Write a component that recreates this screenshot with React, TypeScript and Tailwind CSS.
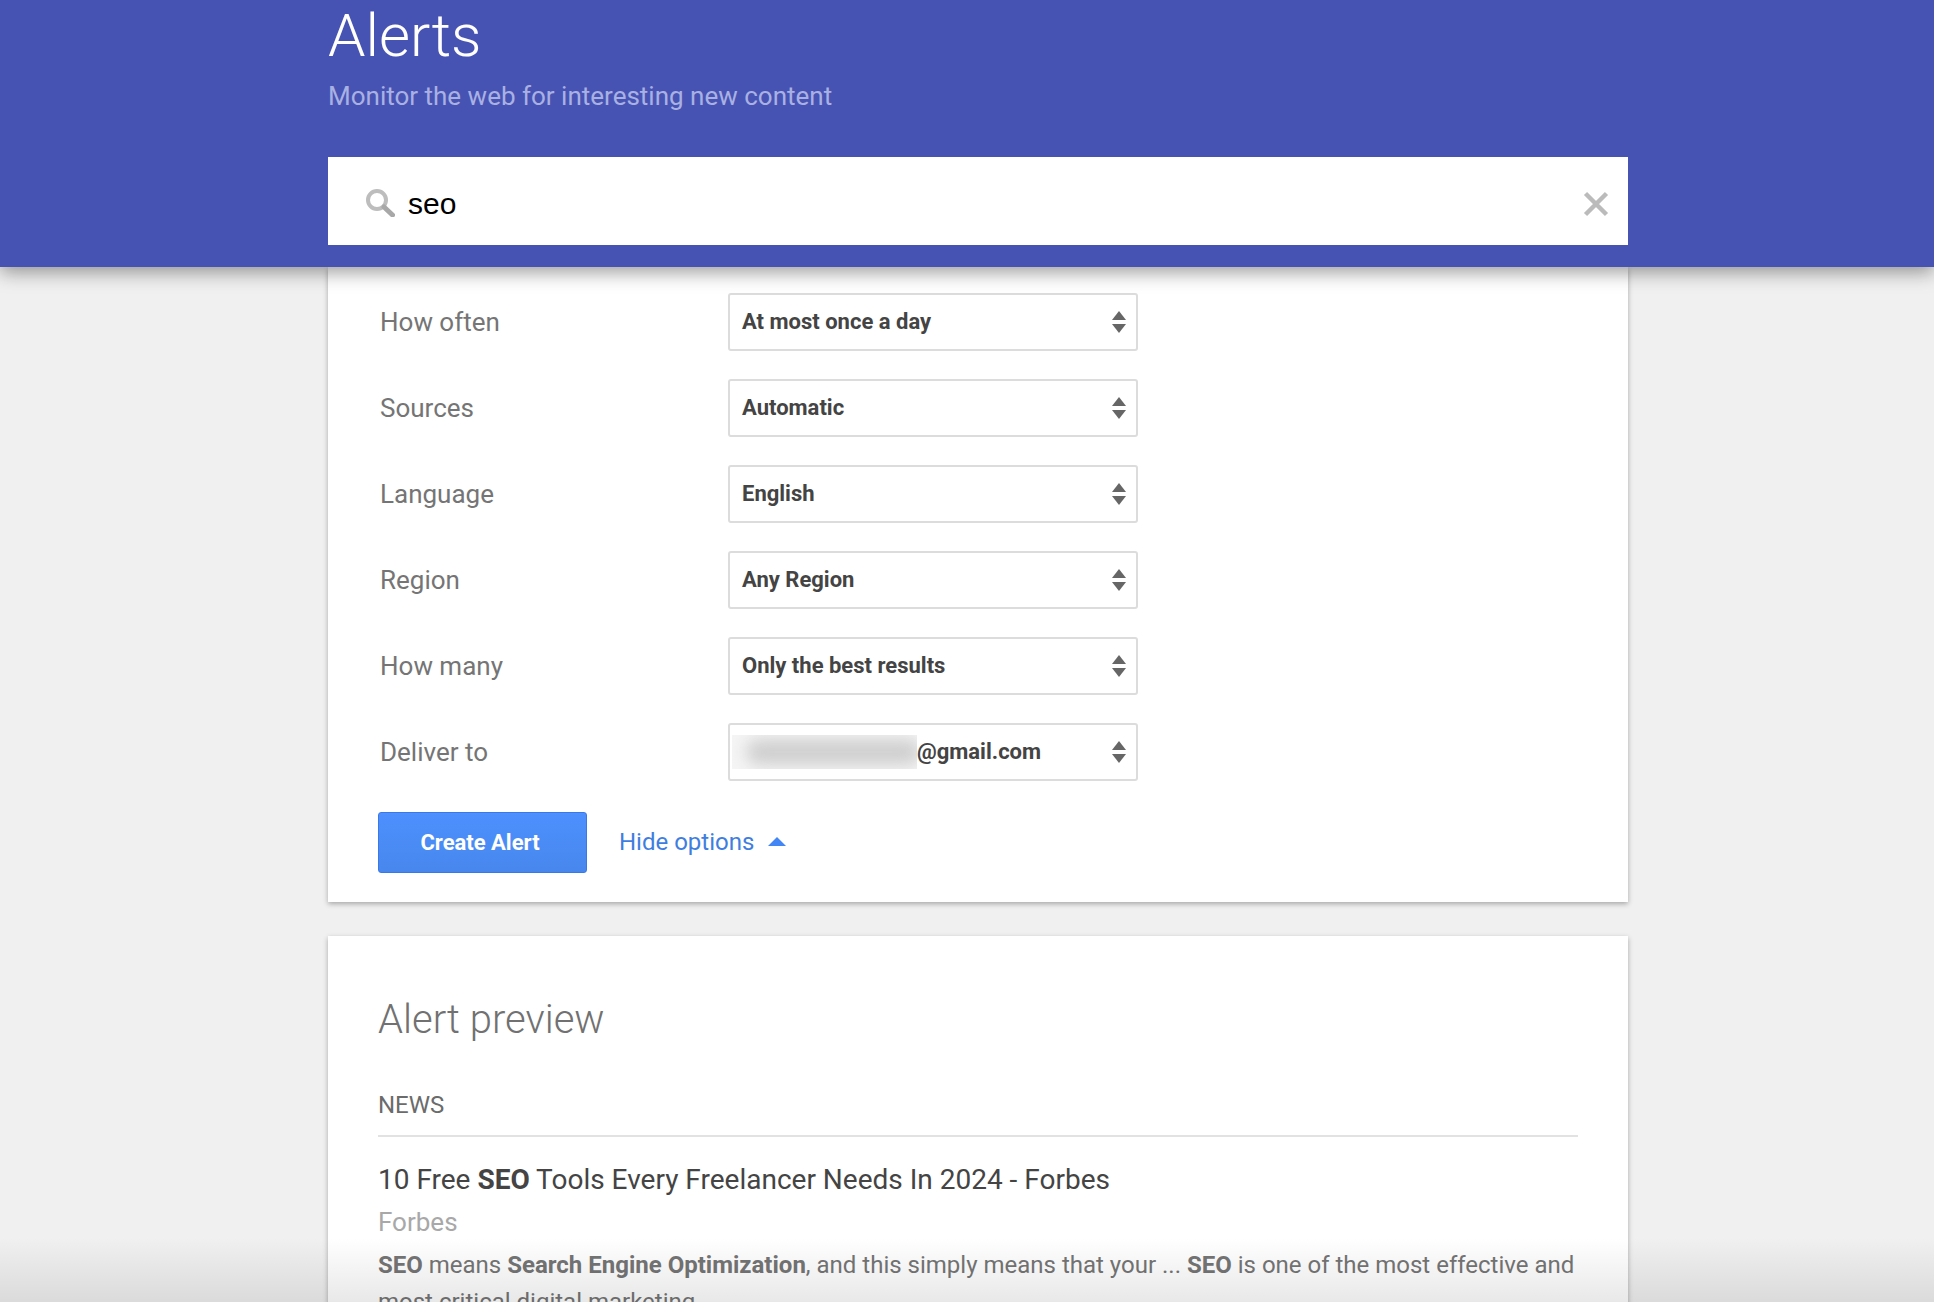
const rows = [
  { label: "How often", value: "At most once a day" },
  { label: "Sources", value: "Automatic" },
  { label: "Language", value: "English" },
  { label: "Region", value: "Any Region" },
  { label: "How many", value: "Only the best results" },
];

function UpDown() {
  return (
    <svg width="16" height="22" viewBox="0 0 16 22" className="shrink-0">
      <path d="M8 0 L15 9 H1 Z" fill="#666" />
      <path d="M1 13 H15 L8 22 Z" fill="#666" />
    </svg>
  );
}

function FakeSelect({ children }: { children: React.ReactNode }) {
  return (
    <div className="relative flex h-[58px] w-[410px] items-center rounded-[3px] border-2 border-[#dcdcdc] bg-white">
      {children}
      <div className="absolute right-[9px] top-[16px]">
        <UpDown />
      </div>
    </div>
  );
}

export default function App() {
  return (
    <div className="relative h-[1302px] w-[1934px] overflow-hidden bg-[#f0f0f0] font-['Roboto',sans-serif]">
      <header className="relative z-10 h-[267px] bg-[#4753b3] pl-[328px] shadow-[0_5px_18px_rgba(0,0,0,0.4)]">
        <h1 className="pt-[3px] text-[60px] leading-[66px] font-light text-white">Alerts</h1>
        <p className="mt-[12px] text-[26px] leading-[30px] text-[#a9b1e3]">Monitor the web for interesting new content</p>
        <div className="mt-[46px] flex h-[88px] w-[1300px] items-center bg-white pl-[38px] pr-[19px]">
          <svg width="29" height="28" viewBox="0 0 29 28" className="mt-[3px] shrink-0">
            <circle cx="11" cy="11" r="9" fill="none" stroke="#bdbdbd" strokeWidth="4" />
            <path d="M18 18 L26.5 26" stroke="#a8a8a8" strokeWidth="5" strokeLinecap="round" />
          </svg>
          <span className="ml-[13px] flex-1 pt-[6px] font-['Liberation_Sans',sans-serif] text-[30px] leading-[36px] text-black">seo</span>
          <svg width="26" height="26" viewBox="0 0 26 26" className="mt-[5px] shrink-0">
            <path d="M2.5 2.5 L23.5 23.5 M23.5 2.5 L2.5 23.5" stroke="#bbb" strokeWidth="4.5" />
          </svg>
        </div>
      </header>

      <main className="ml-[328px] w-[1300px]">
        <section className="bg-white pb-[29px] pl-[50px] pt-[26px] shadow-[0_2px_5px_rgba(0,0,0,0.3)]">
          <div className="flex flex-col gap-[28px]">
            {rows.map((r) => (
              <div key={r.label} className="flex items-center">
                <div className="w-[350px] pl-[2px] text-[26px] text-[#757575]">{r.label}</div>
                <FakeSelect>
                  <span className="pb-[2px] pl-[12px] text-[22px] font-bold text-[#444]">{r.value}</span>
                </FakeSelect>
              </div>
            ))}
            <div className="flex items-center">
              <div className="w-[350px] pl-[2px] text-[26px] text-[#757575]">Deliver to</div>
              <FakeSelect>
                <div className="ml-[2px] h-[34px] w-[185px] overflow-hidden bg-[#f5f5f5]">
                  <div className="ml-[14px] mt-[4px] h-[26px] w-[175px] rounded-full bg-[#cfcfcf] blur-[8px]" />
                </div>
                <span className="pb-[2px] text-[22px] font-bold text-[#444]">@gmail.com</span>
              </FakeSelect>
            </div>
          </div>
          <div className="mt-[31px] flex items-center">
            <button className="h-[61px] w-[209px] rounded-[3px] border border-[#3b78e7] bg-gradient-to-b from-[#4d90fe] to-[#4787ed] pb-[1px] pr-[5px] text-center text-[22px] font-bold text-white">
              Create Alert
            </button>
            <span className="ml-[32px] pb-[2px] text-[24px] text-[#3f7ee0]">Hide options</span>
            <svg width="18" height="9" viewBox="0 0 18 9" className="mb-[2px] ml-[14px] shrink-0">
              <path d="M9 0 L18 9 H0 Z" fill="#4285f4" />
            </svg>
          </div>
        </section>

        <section className="mt-[34px] bg-white px-[50px] pb-[80px] pt-[60px] shadow-[0_2px_5px_rgba(0,0,0,0.3)]">
          <h2 className="text-[40px] leading-[48px] font-light text-[#717171]">Alert preview</h2>
          <div className="mt-[45px] border-b-2 border-[#e2e2e2] pb-[14px] text-[24px] leading-[32px] text-[#6b6b6b]">NEWS</div>
          <div className="mt-[24px] text-[28px] leading-[38px] text-[#444]">
            10 Free <b>SEO</b> Tools Every Freelancer Needs In 2024 - Forbes
          </div>
          <div className="mt-[6px] text-[26px] leading-[34px] text-[#a8a8a8]">Forbes</div>
          <div className="mt-[8px] text-[24px] leading-[37px] text-[#757575]">
            <div>
              <b>SEO</b> means <b>Search Engine Optimization</b>, and this simply means that your ... <b>SEO</b> is one of the most effective and
            </div>
            <div>most critical digital marketing ...</div>
          </div>
        </section>
      </main>

      <div className="absolute inset-x-0 bottom-0 z-20 h-[64px] bg-gradient-to-b from-transparent to-[rgba(0,0,0,0.09)]" />
    </div>
  );
}
